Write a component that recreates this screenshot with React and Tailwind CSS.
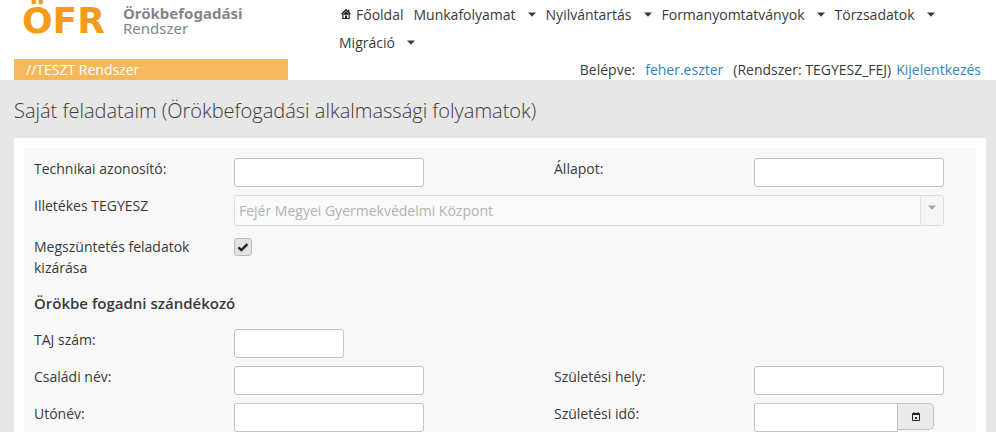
import React, { useState } from 'react';

const menuItems = ['Munkafolyamat', 'Nyilvántartás', 'Formanyomtatványok', 'Törzsadatok', 'Migráció'];

const inputClass = 'h-[29px] rounded-[3px] border border-[#c2c2c2] bg-white px-1 outline-none focus:border-[#2f84c0]';

function Caret() {
  return (
    <svg viewBox="0 0 8 5" width="8" height="5" className="shrink-0" fill="currentColor" aria-hidden="true">
      <path d="M0 0.5h8L4 4.8z" />
    </svg>
  );
}

function HomeIcon() {
  return (
    <svg viewBox="0 0 10 10" width="10" height="10" className="shrink-0" fill="none" stroke="#222" aria-hidden="true">
      <path d="M0.5 5.2 5 0.9l4.5 4.3" strokeWidth="1.5" />
      <path d="M1.9 5v4.5h6.2V5" strokeWidth="1.2" />
      <path d="M2.6 5.2 5 2.8l2.4 2.4z" fill="#222" />
      <path d="M5 9.5V6.4" strokeWidth="2" />
      <path d="M7.8 0.6v2.6" strokeWidth="1.2" />
    </svg>
  );
}

function CalendarIcon() {
  return (
    <svg viewBox="0 0 8 9" width="8" height="9" fill="none" stroke="#222" aria-hidden="true">
      <path d="M0.5 1.5h7v7h-7z" />
      <path d="M0 2.5h8" />
      <path d="M2 0v2M6 0v2" />
      <path d="M3 5h2v2H3z" fill="#222" stroke="none" />
    </svg>
  );
}

function Header() {
  return (
    <header className="flex justify-between bg-white pl-[14px] pr-[15px]">
      <div className="flex w-[274px] shrink-0 flex-col justify-between">
        <a href="#" className="flex gap-[18px] pl-2">
          <span className="font-['DejaVu_Sans',sans-serif] text-[36px] leading-[42px] font-bold text-[#f39c1c]">ÖFR</span>
          <span className="flex flex-col pt-[6px] font-['Noto_Sans',sans-serif] text-[15px] leading-[15px] text-[#868686]">
            <b>Örökbefogadási</b>
            <span>Rendszer</span>
          </span>
        </a>
        <div className="h-[21px] bg-[#f5b95c] px-3 leading-[21px] text-white">//TESZT Rendszer</div>
      </div>
      <div className="flex w-[642px] flex-col">
        <nav className="flex flex-wrap gap-x-[10px]">
          <a href="#" className="flex h-7 items-center gap-[5px] pl-[2px]">
            <HomeIcon />
            Főoldal
          </a>
          {menuItems.map((item) => (
            <button key={item} className="flex h-7 items-center gap-3">
              {item}
              <Caret />
            </button>
          ))}
        </nav>
        <div className="flex h-6 items-end justify-end">
          <span>Belépve:</span>
          <a href="#" className="mx-[10px] text-[#2f84c0]">feher.eszter</a>
          <span>(Rendszer: TEGYESZ_FEJ)</span>
          <a href="#" className="ml-[5px] text-[#2f84c0]">Kijelentkezés</a>
        </div>
      </div>
    </header>
  );
}

function Field({ id, label, className = 'w-[190px]' }) {
  return (
    <div className="flex items-start">
      <label htmlFor={id} className="w-[200px] shrink-0">{label}</label>
      <input id={id} type="text" className={`${inputClass} ${className}`} />
    </div>
  );
}

export default function App() {
  const [excludeClosed, setExcludeClosed] = useState(true);

  return (
    <div className="flex min-h-screen flex-col bg-[#e7e7e7] font-['Open_Sans',sans-serif] text-[14px] leading-[21px] text-[#3a3a3a]">
      <Header />
      <main className="flex flex-1 flex-col pl-[14px] pr-[10px]">
        <h1 className="pt-4 pb-3 text-[20px] leading-[30px] font-light">
          Saját feladataim (Örökbefogadási alkalmassági folyamatok)
        </h1>
        <div className="flex flex-1 flex-col bg-white px-[10px] pt-[10px]">
          <form className="flex flex-1 flex-col gap-2 bg-[#f8f8f8] px-[10px] pt-[10px]">
            <div className="grid grid-cols-[520px_1fr]">
              <Field id="techId" label="Technikai azonosító:" />
              <Field id="state" label="Állapot:" />
            </div>
            <div className="flex items-start">
              <label htmlFor="office" className="w-[200px] shrink-0">Illetékes TEGYESZ</label>
              <div className="relative w-[710px]">
                <select
                  id="office"
                  disabled
                  className="h-[31px] w-full appearance-none rounded-[3px] border border-[#dedede] bg-[#fafafa] px-1 text-[#b3b3b3] opacity-100"
                >
                  <option>Fejér Megyei Gyermekvédelmi Központ</option>
                </select>
                <span className="pointer-events-none absolute inset-y-px right-px flex w-[23px] justify-center border-l border-[#e4e4e4] bg-[#f6f6f6] pt-[9px] text-[#a5a5a5]">
                  <Caret />
                </span>
              </div>
            </div>
            <div className="flex items-start pt-[2px]">
              <label htmlFor="excludeClosed" className="w-[200px] shrink-0 pr-5">Megszüntetés feladatok kizárása</label>
              <div className="relative mt-[2px] h-[18px] w-[18px]">
                <input
                  id="excludeClosed"
                  type="checkbox"
                  checked={excludeClosed}
                  onChange={(e) => setExcludeClosed(e.target.checked)}
                  className="block h-[18px] w-[18px] appearance-none rounded-[3px] border border-[#bbb] bg-[#e3e3e3]"
                />
                {excludeClosed && (
                  <svg viewBox="0 0 18 18" className="pointer-events-none absolute inset-0" fill="none" stroke="#222" strokeWidth="2.4">
                    <path d="M4.4 9.4 7.4 12.2 13.4 6.2" />
                  </svg>
                )}
              </div>
            </div>
            <h2 className="py-[7px] text-[15px] leading-[21px] font-semibold">Örökbe fogadni szándékozó</h2>
            <Field id="taj" label="TAJ szám:" className="w-[110px]" />
            <div className="grid grid-cols-[520px_1fr] gap-y-2">
              <Field id="lastName" label="Családi név:" />
              <Field id="birthPlace" label="Születési hely:" />
              <Field id="firstName" label="Utónév:" />
              <div className="flex items-start">
                <label htmlFor="birthDate" className="w-[200px] shrink-0">Születési idő:</label>
                <input id="birthDate" type="text" className={`${inputClass} w-[144px] rounded-r-none`} />
                <button
                  type="button"
                  aria-label="Születési idő"
                  className="flex h-[27px] w-9 items-center justify-center rounded-r-[5px] border border-l-0 border-[#c2c2c2] bg-[#ebebeb]"
                >
                  <CalendarIcon />
                </button>
              </div>
            </div>
          </form>
        </div>
      </main>
    </div>
  );
}
